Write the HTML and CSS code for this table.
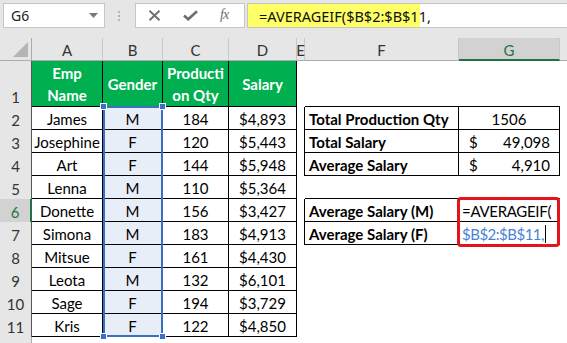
FILE: index.html
```html
<!DOCTYPE html>
<html>
<head>
<meta charset="utf-8">
<link rel="stylesheet" href="styles.css">
</head>
<body>
<div class="toolbar">
  <div class="namebox"><span class="nb-text">G6</span><svg class="dd" width="9" height="5" viewBox="0 0 9 5"><path d="M0 0H9L4.5 5Z" fill="#7a7a7a"/></svg></div>
  <div class="grip"><i></i><i></i><i></i></div>
  <div class="btns">
    <svg class="ic-x" width="13" height="11" viewBox="0 0 13 11"><path d="M1.5 0.8L11.5 10.2M11.5 0.8L1.5 10.2" stroke="#6e6e6e" stroke-width="1.9" fill="none"/></svg>
    <svg class="ic-ok" width="15" height="11" viewBox="0 0 15 11"><path d="M1 5.5L5.2 9.3L14 1.2" stroke="#6e6e6e" stroke-width="2.6" fill="none"/></svg>
    <span class="fx">fx</span>
  </div>
  <div class="fbar"><span class="fhl">=AVERAGEIF($B$2:$B$11,</span></div>
</div>
<div class="wrap">
<div class="sheet">
  <!-- column headers -->
  <div class="corner"><div class="tri"></div></div>
  <div class="ch">A</div><div class="ch">B</div><div class="ch">C</div><div class="ch">D</div>
  <div class="ch ch-e">E</div><div class="ch">F</div><div class="ch act">G</div><div class="ch last"></div>

  <!-- row 1 -->
  <div class="rh rh-top">1</div>
  <div class="d hd">Emp<br>Name</div><div class="d hd">Gender</div><div class="d hd">Producti<br>on Qty</div><div class="d hd">Salary</div>
  <div class="e"></div><div class="bt"></div><div class="bt"></div><div class="e"></div>

  <!-- row 2 -->
  <div class="rh">2</div>
  <div class="d">James</div><div class="d sel">M</div><div class="d">184</div><div class="d">$4,893</div>
  <div class="eb"></div><div class="fb lbl">Total Production Qty</div><div class="fb num">1506</div><div class="e"></div>

  <!-- row 3 -->
  <div class="rh">3</div>
  <div class="d">Josephine</div><div class="d sel">F</div><div class="d">120</div><div class="d">$5,443</div>
  <div class="eb"></div><div class="fb lbl">Total Salary</div><div class="fb acc"><span>$</span><span>49,098</span></div><div class="e"></div>

  <!-- row 4 -->
  <div class="rh">4</div>
  <div class="d">Art</div><div class="d sel">F</div><div class="d">144</div><div class="d">$5,948</div>
  <div class="eb"></div><div class="fb lbl">Average Salary</div><div class="fb acc"><span>$</span><span>4,910</span></div><div class="e"></div>

  <!-- row 5 -->
  <div class="rh">5</div>
  <div class="d">Lenna</div><div class="d sel">M</div><div class="d">110</div><div class="d">$5,364</div>
  <div class="e"></div><div class="bt"></div><div class="bt"></div><div class="e"></div>

  <!-- row 6 -->
  <div class="rh act">6</div>
  <div class="d">Donette</div><div class="d sel">M</div><div class="d">156</div><div class="d">$3,427</div>
  <div class="eb"></div><div class="fb lbl">Average Salary (M)</div><div class="fb edit">=AVERAGEIF(</div><div class="e"></div>

  <!-- row 7 -->
  <div class="rh">7</div>
  <div class="d">Simona</div><div class="d sel">M</div><div class="d">183</div><div class="d">$4,913</div>
  <div class="eb"></div><div class="fb lbl">Average Salary (F)</div><div class="fb edit"><span class="ref">$B$2:$B$11,</span><span class="caret"></span></div><div class="e"></div>

  <!-- row 8 -->
  <div class="rh">8</div>
  <div class="d">Mitsue</div><div class="d sel">F</div><div class="d">161</div><div class="d">$4,430</div>
  <div class="e"></div><div class="e"></div><div class="e"></div><div class="e"></div>

  <!-- row 9 -->
  <div class="rh">9</div>
  <div class="d">Leota</div><div class="d sel">M</div><div class="d">132</div><div class="d">$6,101</div>
  <div class="e"></div><div class="e"></div><div class="e"></div><div class="e"></div>

  <!-- row 10 -->
  <div class="rh">10</div>
  <div class="d">Sage</div><div class="d sel">F</div><div class="d">194</div><div class="d">$3,729</div>
  <div class="e"></div><div class="e"></div><div class="e"></div><div class="e"></div>

  <!-- row 11 -->
  <div class="rh">11</div>
  <div class="d">Kris</div><div class="d sel">F</div><div class="d">122</div><div class="d">$4,850</div>
  <div class="e"></div><div class="e"></div><div class="e"></div><div class="e"></div>

  <!-- row 12 -->
  <div class="rh rh-last"></div>
  <div class="e"></div><div class="e"></div><div class="e"></div><div class="e"></div>
  <div class="e"></div><div class="e"></div><div class="e"></div><div class="e"></div>
</div>
<div class="overlay">
  <div class="selection"><i class="h tl"></i><i class="h tr"></i><i class="h bl"></i><i class="h br"></i></div>
  <div class="redbox"></div>
</div>
</div>
</body>
</html>
```
FILE: styles.css
```css
* { box-sizing: border-box; }
html, body { margin: 0; padding: 0; }
body {
  width: 567px;
  height: 343px;
  overflow: hidden;
  background: #e6e6e6;
  font-family: Lato, "Noto Sans", sans-serif;
}

/* ---------- toolbar ---------- */
.toolbar {
  height: 38px;
  display: flex;
  align-items: flex-start;
  padding-top: 3px;
}
.namebox {
  margin-left: 3px;
  width: 102px;
  height: 25px;
  background: #fff;
  border: 1px solid #c6c6c6;
  display: flex;
  align-items: center;
  justify-content: space-between;
  padding: 0 6px 0 7px;
}
.nb-text {
  font-family: "Noto Sans", sans-serif;
  font-size: 14px;
  color: #222;
}
.grip {
  margin-left: 13px;
  margin-top: 8px;
  display: flex;
  flex-direction: column;
  gap: 2px;
}
.grip i {
  display: block;
  width: 2px;
  height: 2px;
  background: #b4b4b4;
}
.btns {
  margin-left: 15px;
  width: 110px;
  height: 25px;
  background: #fff;
  border: 1px solid #c6c6c6;
  display: flex;
  align-items: center;
  padding-left: 12px;
}
.ic-ok { margin-left: 22px; }
.fx {
  margin-left: 22px;
  font-family: "Liberation Serif", serif;
  font-style: italic;
  font-size: 14px;
  color: #6e6e6e;
  letter-spacing: -1px;
  margin-top: -2px;
}
.fbar {
  margin-left: 2px;
  flex: 1;
  height: 25px;
  background: #fff;
  border: 1px solid #c6c6c6;
  border-right: none;
  display: flex;
}
.fhl {
  display: flex;
  align-items: center;
  background: #ffff66;
  width: 172px;
  padding-left: 11px;
  font-family: "Noto Sans", sans-serif;
  font-size: 14.5px;
  color: #111;
  white-space: nowrap;
}

/* ---------- sheet ---------- */
.wrap {
  display: grid;
}
.sheet, .overlay {
  grid-area: 1 / 1;
  display: grid;
  grid-template-columns: 32px 71px 60px 66px 68px 8px 154px 101px 7px;
  grid-template-rows: 23px 46px repeat(11, 23px);
}
.sheet {
  background: #fff;
  font-size: 15px;
  color: #000;
}
.sheet > div {
  display: flex;
  align-items: center;
  justify-content: center;
  white-space: nowrap;
}

.corner {
  background: #e6e6e6;
  border-right: 1px solid #ababab;
  border-bottom: 1px solid #ababab;
  justify-content: flex-end !important;
  align-items: flex-end !important;
  padding: 0 3px 3px 0;
}
.tri {
  width: 15px;
  height: 15px;
  background: #b4b4b4;
  clip-path: polygon(100% 0, 100% 100%, 0 100%);
}
.ch {
  background: #e6e6e6;
  border-right: 1px solid #c8c8c8;
  border-bottom: 1px solid #ababab;
  color: #333;
  padding-top: 2px;
}
.ch.act {
  background: #d2d2d2;
  color: #217346;
  border-bottom: 2px solid #217346;
}
.ch.last { border-right: none; }

.rh {
  background: #e6e6e6;
  border-right: 1px solid #555;
  color: #333;
  padding-top: 2px;
}
.rh-top {
  align-items: flex-end !important;
  padding-bottom: 1px;
}
.rh.act {
  background: #d2d2d2;
  color: #217346;
  border-right: 2px solid #217346;
}
.rh-last { border-right-color: #ababab; }

.d {
  border-right: 1px solid #000;
  border-bottom: 1px solid #000;
  padding-top: 2px;
}
.d.hd {
  background: #00b050;
  color: #fff;
  font-weight: bold;
  text-align: center;
  line-height: 22px;
  white-space: normal !important;
  padding-top: 0;
}
.d.sel { background: #e8eef8; }

.e { background: #fff; }
.eb { border-right: 1px solid #000; }
.bt { border-bottom: 1px solid #000; }
.fb {
  border-right: 1px solid #000;
  border-bottom: 1px solid #000;
  padding-top: 2px;
}
.fb.lbl {
  justify-content: flex-start !important;
  font-weight: bold;
  padding-left: 4px;
}
.fb.acc {
  justify-content: space-between !important;
  padding: 2px 9px 0 10px;
}
.fb.edit {
  justify-content: flex-start !important;
  padding-left: 3px;
  border-right: none;
  overflow: visible;
  letter-spacing: -0.3px;
}
.ref { color: #4a7fd6; letter-spacing: -0.5px; }
.caret {
  display: inline-block;
  width: 1px;
  height: 18px;
  background: #000;
  margin-left: 1px;
}

/* overlay layer: selection outline + annotation box */
.overlay {
  pointer-events: none;
}
.selection {
  grid-column: 3;
  grid-row: 3 / 13;
  margin-top: -1px;
  border: 2px solid #3b6fc5;
  position: relative;
}
.h {
  position: absolute;
  width: 7px;
  height: 7px;
  background: #3b6fc5;
  border: 1px solid #fff;
}
.tl { left: -5px; top: -5px; }
.tr { right: -5px; top: -5px; }
.bl { left: -5px; bottom: -5px; }
.br { right: -5px; bottom: -5px; }

.redbox {
  grid-column: 8;
  grid-row: 7 / 9;
  margin: -2px 0 -2px -2px;
  border: 3px solid #e3141c;
  border-radius: 4px;
}
```
